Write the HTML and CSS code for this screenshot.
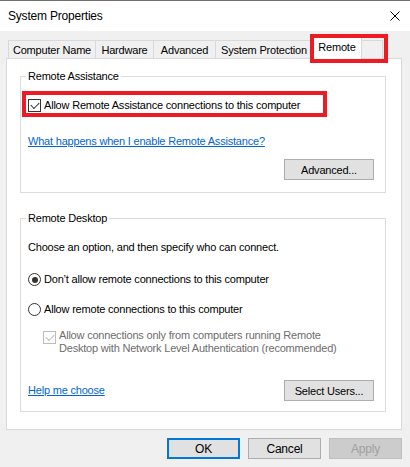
FILE: index.html
```html
<!DOCTYPE html>
<html>
  <head>
    <meta charset="UTF-8" />
    <title>System Properties</title>
    <link rel="stylesheet" href="styles.css">
  </head>
  <body>
    <div class="window">
      <div class="titlebar">
        <span class="title">System Properties</span>
        <svg class="close" width="10" height="10" viewBox="0 0 10 10">
          <path d="M0.5 0.5L9.5 9.5M9.5 0.5L0.5 9.5" stroke="#000" stroke-width="1" fill="none" />
        </svg>
      </div>

      <div class="content">
        <div class="tabs">
          <div class="tab tab-name">Computer Name</div>
          <div class="tab tab-hw">Hardware</div>
          <div class="tab tab-adv">Advanced</div>
          <div class="tab tab-sp">System Protection</div>
          <div class="tab-pair">
            <div class="tab tab-remote active">Remote</div>
            <div class="tab tab-blank"></div>
            <span class="mark mark-tab"></span>
          </div>
        </div>

        <div class="panel">
          <fieldset class="group group-assist">
            <legend>Remote Assistance</legend>
            <div class="option">
              <span class="checkbox checked"></span>
              <span>Allow Remote Assistance connections to this computer</span>
              <span class="mark mark-option"></span>
            </div>
            <a class="link link-what" href="#">What happens when I enable Remote Assistance?</a>
            <div class="btn-row">
              <button class="btn">Advanced...</button>
            </div>
          </fieldset>

          <fieldset class="group group-desktop">
            <legend>Remote Desktop</legend>
            <div class="hint">Choose an option, and then specify who can connect.</div>
            <div class="option radio-first">
              <span class="radio selected"></span>
              <span>Don’t allow remote connections to this computer</span>
            </div>
            <div class="option radio-second">
              <span class="radio"></span>
              <span>Allow remote connections to this computer</span>
            </div>
            <div class="option nla">
              <span class="checkbox checked disabled"></span>
              <span>Allow connections only from computers running Remote<br>Desktop with Network Level Authentication (recommended)</span>
            </div>
            <div class="help-row">
              <a class="link" href="#">Help me choose</a>
              <button class="btn">Select Users...</button>
            </div>
          </fieldset>
        </div>

        <div class="actions">
          <button class="btn btn-dialog default">OK</button>
          <button class="btn btn-dialog">Cancel</button>
          <button class="btn btn-dialog" disabled>Apply</button>
        </div>
      </div>
    </div>
  </body>
</html>
```

FILE: styles.css
```css
/* Base */
html, body {
  margin: 0;
  padding: 0;
}

body {
  width: 410px;
  height: 467px;
  overflow: hidden;
  font-family: "Liberation Sans", Arial, sans-serif;
  font-size: 11px;
  letter-spacing: -0.2px;
  color: #000;
  background: #f0f0f0;
}

.window {
  height: 467px;
  background: #f0f0f0;
  border-top: 1px solid #6f6f6f;
  box-sizing: border-box;
}

/* Title bar */
.titlebar {
  height: 30px;
  background: #fff;
  display: flex;
  align-items: center;
  justify-content: space-between;
  padding: 0 10px 0 8px;
  font-size: 12px;
}

.close {
  display: block;
}

/* Tabs */
.tabs {
  display: flex;
  align-items: flex-end;
  margin: 5px 0 0 8px;
  height: 23px;
}

.tab {
  box-sizing: border-box;
  height: 18px;
  margin-bottom: 1px;
  padding-top: 2px;
  line-height: 15px;
  text-align: center;
  white-space: nowrap;
  background: #f0f0f0;
  border-top: 1px solid #d9d9d9;
  border-left: 1px solid #d9d9d9;
}

.tab-name { width: 87px; }
.tab-hw { width: 58px; }
.tab-adv { width: 62px; }
.tab-sp { width: 97px; }

.tab-pair {
  position: relative;
  display: flex;
  align-items: flex-end;
}

.tab.active {
  position: relative;
  z-index: 1;
  width: 50px;
  height: 23px;
  margin-bottom: 0;
  padding-top: 3px;
  background: #fff;
  border-right: 1px solid #d9d9d9;
}

.tab-blank {
  width: 21px;
  border-left: none;
  border-right: 1px solid #d9d9d9;
}

/* Red annotation boxes */
.mark {
  position: absolute;
  z-index: 2;
  box-sizing: border-box;
  border: 4px solid #ed1c24;
  pointer-events: none;
}

.mark-tab {
  left: -2px;
  top: -2px;
  width: 78px;
  height: 29px;
}

.mark-option {
  left: -6px;
  top: -7px;
  width: 305px;
  height: 26px;
}

/* Tab page */
.panel {
  box-sizing: border-box;
  width: 396px;
  margin: -1px 0 0 6px;
  padding: 10px 15px 17px 13px;
  background: #fff;
  border: 1px solid #d9d9d9;
}

.group {
  margin: 0;
  padding: 15px 11px 12px 7px;
  min-width: 0;
  border: 1px solid #dcdcdc;
}

.group legend {
  margin-left: -2px;
  padding: 0 2px;
  line-height: 14px;
}

.group-desktop {
  margin-top: 18px;
  padding-bottom: 10px;
}

.option {
  position: relative;
  display: flex;
  align-items: center;
  height: 15px;
  line-height: 15px;
  white-space: nowrap;
}

.checkbox, .radio {
  box-sizing: border-box;
  flex-shrink: 0;
  width: 13px;
  height: 13px;
  margin-right: 3px;
  background: #fff;
  border: 1px solid #333;
  position: relative;
}

.checkbox.checked::after {
  content: "";
  position: absolute;
  left: 1px;
  top: 0px;
  width: 7px;
  height: 4px;
  border-left: 1px solid #333;
  border-bottom: 1px solid #333;
  transform: translate(1px, 2px) rotate(-45deg);
}

.checkbox.disabled {
  border-color: #bcbcbc;
}

.checkbox.disabled::after {
  border-color: #bcbcbc;
}

.radio {
  border-radius: 50%;
}

.radio.selected::after {
  content: "";
  position: absolute;
  left: 2.5px;
  top: 2.5px;
  width: 6px;
  height: 6px;
  border-radius: 50%;
  background: #333;
}

.link {
  display: block;
  width: max-content;
  color: #0066cc;
  text-decoration: underline;
  line-height: 15px;
}

.link-what {
  margin-top: 21px;
}

.btn-row {
  display: flex;
  justify-content: flex-end;
  margin-top: 10px;
}

.btn {
  box-sizing: border-box;
  width: 90px;
  height: 21px;
  padding: 0;
  font-family: inherit;
  font-size: 11px;
  letter-spacing: inherit;
  color: #000;
  background: #e1e1e1;
  border: 1px solid #adadad;
}

.hint {
  line-height: 15px;
}

.radio-first {
  margin-top: 17px;
}

.radio-second {
  margin-top: 15px;
}

.nla {
  align-items: flex-start;
  height: auto;
  margin-top: 12px;
  padding-left: 15px;
  line-height: 13px;
  color: #6d6d6d;
}

.nla .checkbox {
  margin-top: 2px;
}

.help-row {
  display: flex;
  align-items: center;
  justify-content: space-between;
  margin-top: 25px;
}

/* Dialog buttons */
.actions {
  display: flex;
  justify-content: flex-end;
  gap: 8px;
  margin: 8px 8px 0 0;
}

.btn-dialog {
  width: 73px;
  font-size: 12px;
}

.btn-dialog.default {
  border: 2px solid #0078d7;
}

.btn-dialog:disabled {
  color: #a0a0a0;
  background: #cccccc;
  border-color: #bfbfbf;
}
```
